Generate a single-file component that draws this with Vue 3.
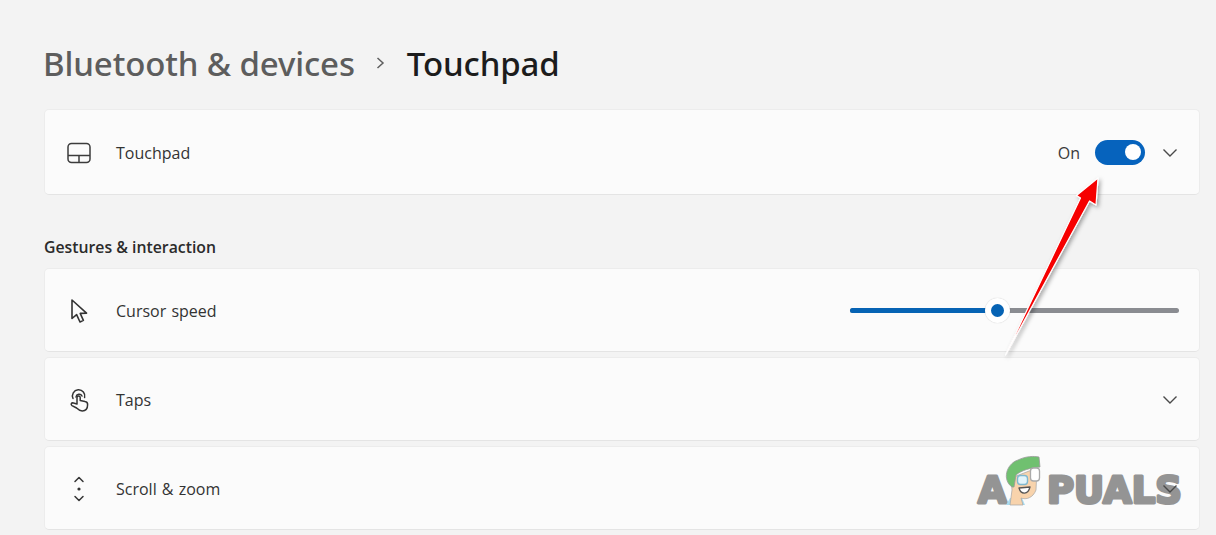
<script setup>
const rows = [
  { id: 'taps', label: 'Taps' },
  { id: 'scroll', label: 'Scroll & zoom' },
]
</script>

<template>
  <div class="page">
    <header class="crumbs">
      <span class="parent">Bluetooth &amp; devices</span>
      <svg class="sep" width="12" height="14" viewBox="0 0 12 14" fill="none">
        <path d="M2.5 2 L8 7 L2.5 12" stroke="#5f5f5f" stroke-width="1.5" />
      </svg>
      <span class="current">Touchpad</span>
    </header>

    <section class="card first">
      <span class="icon">
        <svg width="24" height="22" viewBox="0 0 24 22" fill="none" stroke="#3c3c3c" stroke-width="1.5">
          <rect x="1" y="1.5" width="22" height="19" rx="3.5" />
          <path d="M1 13.5 H23 M12 13.5 V20.5" />
        </svg>
      </span>
      <span class="label">Touchpad</span>
      <span class="right">
        <span class="state">On</span>
        <span class="toggle"><span class="knob"></span></span>
        <svg class="chev" width="16" height="10" viewBox="0 0 16 10" fill="none">
          <path d="M1.5 1.5 L8 8 L14.5 1.5" stroke="#4a4a4a" stroke-width="1.4" />
        </svg>
      </span>
    </section>

    <h2 class="section">Gestures &amp; interaction</h2>

    <section class="card">
      <span class="icon">
        <svg width="24" height="26" viewBox="0 0 24 26" fill="none" stroke="#333" stroke-width="1.6" stroke-linejoin="round">
          <path d="M5 2 V20.5 L9.6 16.6 L13 24 L16.4 22.4 L13.2 15.4 L19.5 15.2 Z" />
        </svg>
      </span>
      <span class="label">Cursor speed</span>
      <span class="slider">
        <span class="fill"></span>
        <span class="thumb"></span>
      </span>
    </section>

    <section v-for="row in rows" :key="row.id" class="card gap">
      <span class="icon">
        <svg v-if="row.id === 'taps'" width="24" height="24" viewBox="0 0 24 24" fill="none" stroke="#333" stroke-width="1.5" stroke-linejoin="round" stroke-linecap="round">
          <path d="M6 10.5 A6.2 6.2 0 1 1 17.6 9.5" />
          <path d="M9 9 A3.2 3.2 0 0 1 15 8" />
          <path d="M10 16 V9.5 A1.6 1.6 0 0 1 13.2 9.5 V12.6 L18 13.6 A3 3 0 0 1 20.6 16.8 C20.6 20 19 23 15.2 23 C12.4 23 11.2 21.6 9.6 20 L5 17.6 C3.4 16.6 4.4 14.4 6.4 15 Z" />
        </svg>
        <svg v-else width="24" height="26" viewBox="0 0 24 26" fill="none" stroke="#333" stroke-width="1.5" stroke-linecap="round" stroke-linejoin="round">
          <path d="M8 5.5 L12 1.5 L16 5.5" />
          <path d="M8 20.5 L12 24.5 L16 20.5" />
          <circle cx="12" cy="13" r="1.6" fill="#333" stroke="none" />
        </svg>
      </span>
      <span class="label">{{ row.label }}</span>
      <span class="right">
        <svg class="chev" width="16" height="10" viewBox="0 0 16 10" fill="none">
          <path d="M1.5 1.5 L8 8 L14.5 1.5" stroke="#4a4a4a" stroke-width="1.4" />
        </svg>
      </span>
    </section>

    <svg class="arrow" width="120" height="200" viewBox="1000 170 120 200">
      <defs>
        <filter id="arrowShadow" x="-30%" y="-30%" width="160%" height="160%">
          <feDropShadow dx="2" dy="2" stdDeviation="2" flood-color="#000" flood-opacity="0.35" />
        </filter>
      </defs>
      <polygon
        points="1098,178 1096,205 1089.5,201 1005.5,355 1080.5,198 1076.5,195.5"
        fill="#f60000"
        stroke="#fff"
        stroke-width="1.2"
        stroke-linejoin="round"
        filter="url(#arrowShadow)"
      />
    </svg>

    <svg class="mark" width="240" height="80" viewBox="960 455 240 80">
      <g class="mark-letters">
        <text x="978" y="503">A</text>
        <text x="1047" y="503">PUALS</text>
      </g>
      <path d="M1006 505 L1010 498 H1022 L1025 505 Z" fill="#a9dcf0" />
      <path d="M1011 478 L1037 468 L1036 490 C1033 498 1026 500 1021 498 L1023 505 H1010 L1012 490 Z" fill="#f8d3ac" stroke="#a5a5a5" stroke-width="0.7" />
      <path d="M1012 487 C1002 480 1006 464 1018 460 C1026 456 1034 456 1039 457 L1040 467 C1030 468 1022 470 1016 475 L1014 487 Z" fill="#70c070" stroke="#999" stroke-width="0.8" />
      <rect x="1017.5" y="475.5" width="10" height="9" rx="3" fill="#e2f4fb" stroke="#7fb8d0" stroke-width="1.4" />
      <rect x="1030.5" y="468" width="9" height="13" rx="3" fill="#fff" stroke="#aaa" stroke-width="1.3" />
      <path d="M1019 488 C1021 495 1028 495 1030 487 Z" fill="#fff" stroke="#555" stroke-width="1.3" stroke-linejoin="round" />
    </svg>
  </div>
</template>

<style scoped>
.page {
  position: relative;
  width: 1216px;
  height: 535px;
  overflow: hidden;
  box-sizing: border-box;
  padding: 39px 16px 0 44px;
  background: #f3f3f3;
  font-family: "Open Sans", "Noto Sans", sans-serif;
  color: #2b2b2b;
}
.crumbs {
  display: flex;
  align-items: center;
  height: 48px;
  margin-bottom: 22px;
  font-family: "Noto Sans", "Open Sans", sans-serif;
  font-size: 33px;
  font-weight: 500;
  letter-spacing: -0.12px;
  white-space: nowrap;
}
.parent { color: #5d5d5d; margin-left: -1px; }
.sep { margin: 0 20px 0 20px; }
.current { color: #1c1c1c; }
.card {
  position: relative;
  display: flex;
  align-items: center;
  box-sizing: border-box;
  height: 84px;
  padding: 0 20px 0 22px;
  background: #fbfbfb;
  border: 1px solid #ececec;
  border-bottom-color: #e4e4e4;
  border-radius: 5px;
}
.card.first { height: 86px; }
.card.gap { margin-top: 5px; }
.icon {
  display: flex;
  justify-content: center;
  width: 24px;
  margin: 2px 25px 0 0;
}
.label {
  margin-top: 1px;
  font-size: 16px;
  word-spacing: 1px;
  color: #333;
}
.right {
  position: relative;
  z-index: 3;
  display: flex;
  align-items: center;
  margin-left: auto;
  margin-right: 1px;
}
.state {
  margin-top: 2px;
  font-size: 16px;
  color: #3a3a3a;
  margin-right: 15px;
}
.toggle {
  display: flex;
  align-items: center;
  justify-content: flex-end;
  box-sizing: border-box;
  width: 50px;
  height: 25px;
  padding-right: 4px;
  background: #0663bd;
  border-radius: 13px;
}
.knob {
  width: 16px;
  height: 16px;
  background: #fff;
  border-radius: 50%;
}
.chev { margin: 1px 0 0 17px; }
.section {
  height: 24px;
  margin: 40px 0 9px;
  font-size: 15.8px;
  line-height: 24px;
  font-weight: 600;
  color: #2b2b2b;
}
.slider {
  position: relative;
  width: 329px;
  height: 5px;
  margin-left: auto;
  background: #8a8c91;
  border-radius: 3px;
}
.fill {
  position: absolute;
  left: 0;
  top: 0;
  bottom: 0;
  width: 147px;
  background: #0663b4;
  border-radius: 3px;
}
.thumb {
  position: absolute;
  left: 135px;
  top: -10px;
  box-sizing: border-box;
  width: 25px;
  height: 25px;
  background: #0663b4;
  border: 6px solid #fff;
  border-radius: 50%;
  box-shadow: 0 0 1px rgba(0, 0, 0, 0.25);
}
.arrow {
  position: absolute;
  left: 1000px;
  top: 170px;
  z-index: 4;
  overflow: visible;
}
.mark {
  position: absolute;
  left: 960px;
  top: 455px;
  z-index: 2;
}
.mark-letters text {
  font-family: "DejaVu Sans", sans-serif;
  font-weight: 700;
  font-size: 37px;
  fill: #949494;
  stroke: #949494;
  stroke-width: 3px;
  stroke-linejoin: round;
}
</style>

<style>
html, body { margin: 0; background: #f3f3f3; overflow: hidden; }
</style>
